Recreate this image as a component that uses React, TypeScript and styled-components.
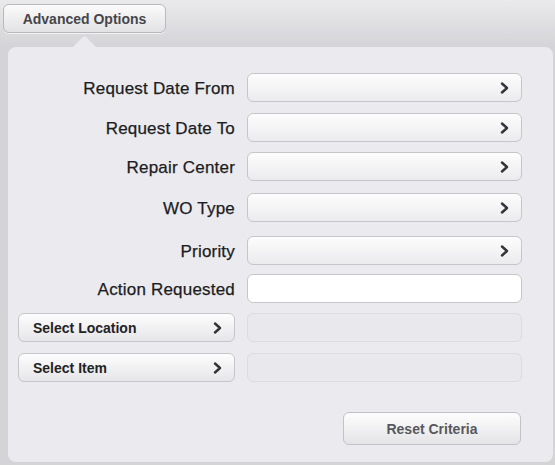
import React from "react";
import styled, { createGlobalStyle } from "styled-components";

const Global = createGlobalStyle`
  html, body { margin: 0; padding: 0; }
  body {
    width: 555px;
    height: 465px;
    overflow: hidden;
    font-family: "Liberation Sans", Arial, sans-serif;
    background: linear-gradient(to bottom, #eaeaec 0px, #d4d4d8 47px, #d4d4d7 100%);
  }
`;

const Screen = styled.div`
  width: 555px;
  height: 465px;
  display: flex;
  flex-direction: column;
`;

const Header = styled.div`
  height: 47px;
  box-sizing: border-box;
  padding: 4px 0 0 3px;
  display: flex;
  align-items: flex-start;
`;

const TabButton = styled.button`
  width: 163px;
  height: 29px;
  box-sizing: border-box;
  border: 1px solid #b9b9bd;
  border-radius: 6px;
  background: linear-gradient(to bottom, #fbfbfb, #e2e2e5);
  font-family: "Liberation Sans", Arial, sans-serif;
  font-weight: bold;
  font-size: 14px;
  color: #464649;
  padding: 0;
  box-shadow: 0 1px 0 rgba(255, 255, 255, 0.6);
`;

const Panel = styled.div`
  position: relative;
  margin: 0 2px 0 8px;
  box-sizing: border-box;
  background: #ebebef;
  border-radius: 8px;
  padding: 26px 0 17px 10px;
  display: flex;
  flex-direction: column;

  &::before {
    content: "";
    position: absolute;
    left: 68px;
    top: -8px;
    width: 17px;
    height: 17px;
    background: #ebebef;
    transform: rotate(45deg);
    border-top-left-radius: 3px;
  }
`;

const Row = styled.div<{ $mt: number }>`
  display: grid;
  grid-template-columns: 218px 275px;
  column-gap: 11px;
  height: 29px;
  margin-top: ${(p) => p.$mt}px;
  align-items: center;
`;

const Label = styled.div`
  text-align: right;
  font-size: 17px;
  letter-spacing: 0.2px;
  color: #1c1c1e;
  -webkit-text-stroke: 0.25px #1c1c1e;
  padding: 2px 1px 0 0;
  white-space: nowrap;
`;

const Field = styled.div<{ $kind: "select" | "text" | "disabled" }>`
  height: 29px;
  box-sizing: border-box;
  border-radius: 6px;
  border: 1.5px solid ${(p) => (p.$kind === "disabled" ? "#dcdce0" : "#c6c6ca")};
  background: ${(p) =>
    p.$kind === "text"
      ? "#ffffff"
      : p.$kind === "disabled"
      ? "#e9e9ed"
      : "linear-gradient(to bottom, #fdfdfd, #ebebee)"};
  display: flex;
  align-items: center;
  justify-content: flex-end;
  padding-right: 12px;
`;

const SideButton = styled.button`
  width: 217px;
  height: 29px;
  box-sizing: border-box;
  border: 1.5px solid #c6c6ca;
  border-radius: 6px;
  background: linear-gradient(to bottom, #fdfdfd, #e6e6e9);
  display: flex;
  align-items: center;
  justify-content: space-between;
  padding: 0 12px 0 14px;
  font-family: "Liberation Sans", Arial, sans-serif;
  font-weight: bold;
  font-size: 14px;
  color: #232325;
`;

const Footer = styled.div`
  display: flex;
  justify-content: flex-end;
  width: 503px;
  margin-top: 30px;
`;

const ResetButton = styled.button`
  width: 178px;
  height: 33px;
  box-sizing: border-box;
  border: 1.5px solid #c3c3c7;
  border-radius: 6px;
  background: linear-gradient(to bottom, #fdfdfd, #e4e4e7);
  font-family: "Liberation Sans", Arial, sans-serif;
  font-weight: bold;
  font-size: 14px;
  color: #58585c;
`;

const Chevron = () => (
  <svg width="9" height="12" viewBox="0 0 9 12">
    <path d="M2 1.5 L7 6 L2 10.5" fill="none" stroke="#343436" strokeWidth="2.4" strokeLinecap="round" strokeLinejoin="round" />
  </svg>
);

const rows: { label: string; kind: "select" | "text"; mt: number }[] = [
  { label: "Request Date From", kind: "select", mt: 0 },
  { label: "Request Date To", kind: "select", mt: 11 },
  { label: "Repair Center", kind: "select", mt: 10 },
  { label: "WO Type", kind: "select", mt: 12 },
  { label: "Priority", kind: "select", mt: 14 },
  { label: "Action Requested", kind: "text", mt: 9 },
];

export default function App() {
  return (
    <>
      <Global />
      <Screen>
        <Header>
          <TabButton>Advanced Options</TabButton>
        </Header>
        <Panel>
          {rows.map((r) => (
            <Row key={r.label} $mt={r.mt}>
              <Label>{r.label}</Label>
              <Field $kind={r.kind}>{r.kind === "select" && <Chevron />}</Field>
            </Row>
          ))}
          <Row $mt={10}>
            <SideButton>
              <span>Select Location</span>
              <Chevron />
            </SideButton>
            <Field $kind="disabled" />
          </Row>
          <Row $mt={11}>
            <SideButton>
              <span>Select Item</span>
              <Chevron />
            </SideButton>
            <Field $kind="disabled" />
          </Row>
          <Footer>
            <ResetButton>Reset Criteria</ResetButton>
          </Footer>
        </Panel>
      </Screen>
    </>
  );
}
